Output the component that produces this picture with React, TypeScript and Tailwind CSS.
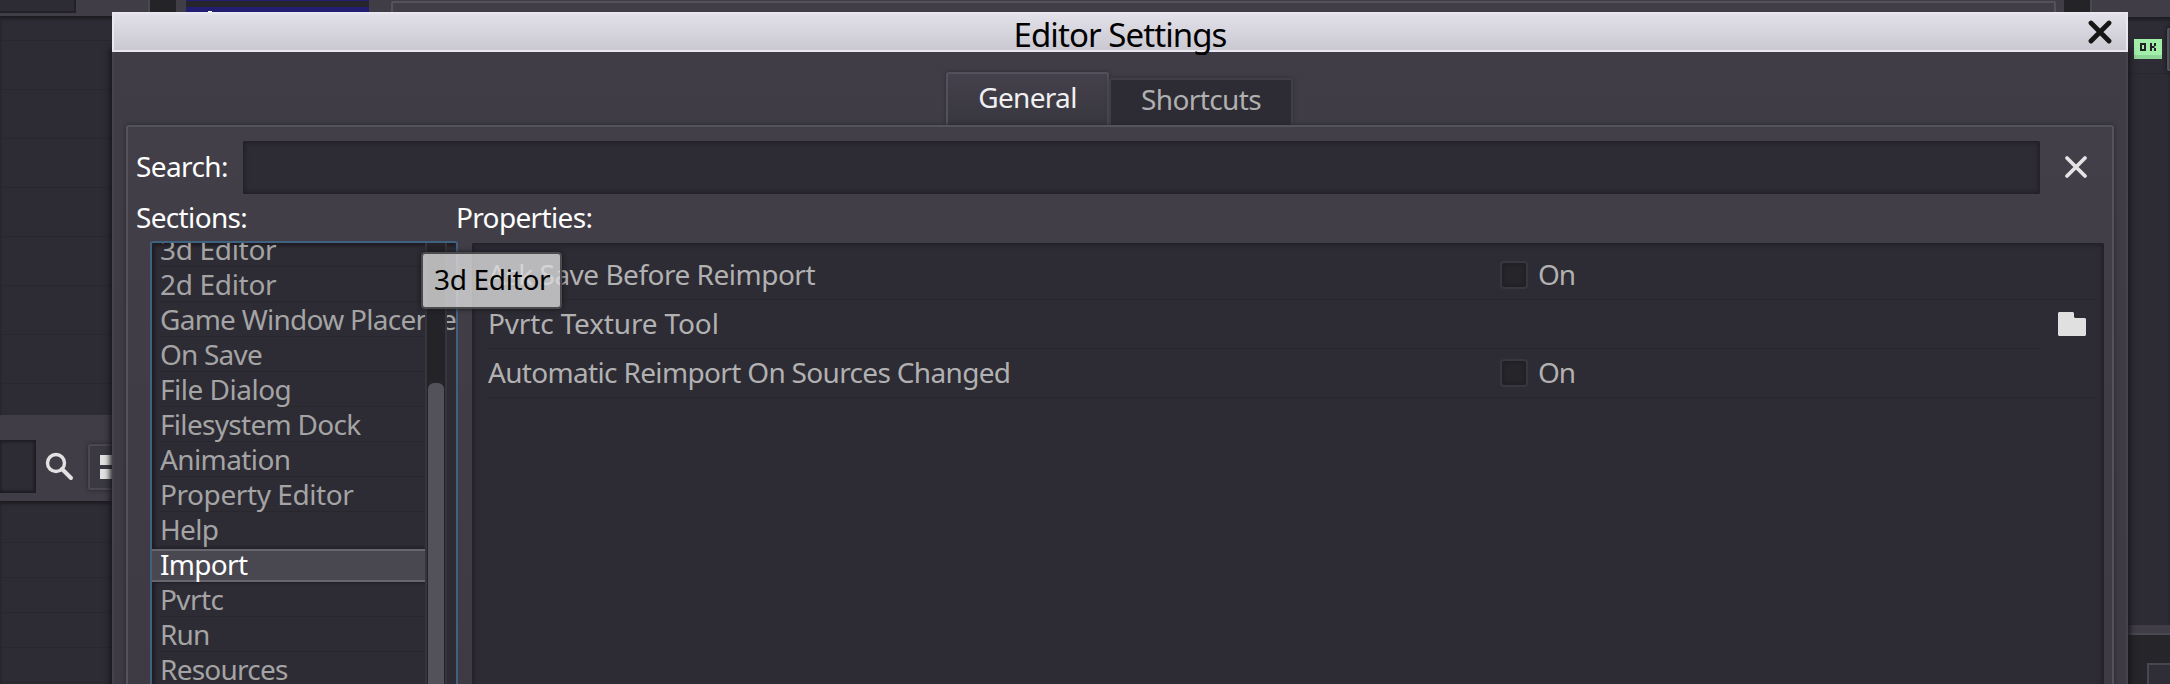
import type { ReactNode } from "react";

const sections = [
  { name: "3d Editor", tracking: "tracking-[-0.32px]" },
  { name: "2d Editor", tracking: "tracking-[-0.32px]" },
  { name: "Game Window Placement", tracking: "tracking-[-0.73px]" },
  { name: "On Save", tracking: "tracking-[-0.8px]" },
  { name: "File Dialog", tracking: "tracking-[-0.5px]" },
  { name: "Filesystem Dock", tracking: "tracking-[-0.7px]" },
  { name: "Animation", tracking: "tracking-[-0.6px]" },
  { name: "Property Editor", tracking: "tracking-[-0.42px]" },
  { name: "Help", tracking: "tracking-[-0.7px]" },
  { name: "Import", tracking: "tracking-[-0.7px]" },
  { name: "Pvrtc", tracking: "tracking-[-0.6px]" },
  { name: "Run", tracking: "tracking-[-0.8px]" },
  { name: "Resources", tracking: "tracking-[-0.75px]" },
];

function Lines({ first, pitch, count }: { first: string; pitch: string; count: number }) {
  return (
    <div>
      <div className={`${first} border-b border-[#28272c]`} />
      {Array.from({ length: count }, (_, i) => (
        <div key={i} className={`${pitch} border-b border-[#28272c]`} />
      ))}
    </div>
  );
}

function Backdrop() {
  return (
    <div className="flex h-full w-full justify-between bg-[#242328]">
      <div className="flex w-[150px] flex-col border-r-2 border-[#494752] bg-[#403d47]">
        <div className="h-[13px] w-[76px] shrink-0 border-r-2 border-b-2 border-[#222127] bg-[#2d2b34]" />
        <div className="mt-[3px] h-[399px] w-full shrink-0 overflow-hidden bg-[#2d2b34] shadow-[inset_0_3px_3px_#1e1d22]">
          <Lines first="h-[25px]" pitch="h-[49px]" count={7} />
        </div>
        <div className="flex h-[86px] w-full shrink-0 items-center overflow-hidden">
          <div className="mt-[25px] h-[53px] w-[36px] shrink-0 self-start bg-[#2d2b34] shadow-[inset_-2px_0_3px_#1e1d22,inset_0_2px_3px_#1e1d22,inset_0_-2px_3px_#1e1d22]" />
          <svg className="mt-[17px] ml-[9px] shrink-0" width="30" height="30" viewBox="0 0 30 30" fill="none" stroke="#e2e2e2">
            <circle cx="11" cy="11" r="8.5" strokeWidth="3.4" />
            <path d="M17 17 L26 26" strokeWidth="4" strokeLinecap="round" />
          </svg>
          <div className="mt-[17px] ml-[13px] flex h-[46px] w-[50px] shrink-0 flex-col justify-center gap-[4px] rounded-[2px] border-2 border-[#4a4853] bg-[#3a3841] pl-[10px] shadow-[0_0_4px_#25242a]">
            <div className="h-[10px] w-[12px] bg-[#e2e2e2]" />
            <div className="h-[10px] w-[12px] bg-[#e2e2e2]" />
          </div>
        </div>
        <div className="w-full flex-1 overflow-hidden bg-[#2d2b34] shadow-[inset_0_3px_3px_#1e1d22]">
          <Lines first="h-[42px]" pitch="h-[35px]" count={4} />
        </div>
      </div>
      <div className="ml-[26px] flex flex-1 bg-[#403d47]">
        <div className="ml-[10px] h-[40px] w-[183px] bg-[#211d70] pt-px">
          <div className="h-[6px] bg-[#26252b]" />
          <div className="mt-[4px] ml-[22px] h-px w-[4px] bg-white" />
        </div>
        <div className="mt-px mr-[8px] ml-[22px] h-[40px] flex-1 rounded-[2px] border-2 border-[#54525e] bg-[#403d47]" />
      </div>
      <div className="ml-[26px] flex w-[80px] flex-col border-l-2 border-[#4a4852] bg-[#403d47]">
        <div className="mt-[17px] h-[608px] bg-[#2d2b34] shadow-[inset_0_3px_3px_#1e1d22]">
          <div className="flex h-[57px] items-start border-b border-[#28272c] pt-[22px] pl-[42px]">
            <div className="flex h-[20px] w-[28px] shrink-0 border-b-4 border-[#90d598] bg-[#a2efaa] pt-[4px] pl-[6px]">
              <svg width="18" height="8" viewBox="0 0 18 8" fill="none" stroke="#222127" strokeWidth="2">
                <path d="M1 1 H5 V7 H1 Z" />
                <path d="M11 0 V8 M15 0 V3 M15 5 V8" />
                <path d="M12 4 H14.5" />
              </svg>
            </div>
            <div className="-mt-[11px] ml-[5px] h-[43px] w-[20px] shrink-0 rounded-l-[2px] border-2 border-[#55535e] bg-[#403d47] shadow-[0_0_4px_#111]" />
          </div>
        </div>
        <div className="h-[10px] border-b-2 border-[#4a4852]" />
        <div className="flex-1 bg-[#26252a] pt-[28px] pl-[55px]">
          <div className="h-full border-t-2 border-l-2 border-[#484650] bg-[#2f2d36]" />
        </div>
      </div>
    </div>
  );
}

function Cross({ color, width, size }: { color: string; width: number; size: number }) {
  return (
    <svg width={size} height={size} viewBox="0 0 24 24" className="shrink-0" fill="none" stroke={color} strokeWidth={width}>
      <path d="M3 3 L21 21 M21 3 L3 21" strokeLinecap="round" />
    </svg>
  );
}

function PropertyRow({ label, tracking, children, short }: { label: string; tracking: string; children: ReactNode; short?: boolean }) {
  return (
    <div className="relative flex h-[49px] items-center pb-[2px]">
      <span className={`w-[1014px] shrink-0 text-[#b1b1b1] ${tracking}`}>{label}</span>
      {children}
      <div className={short ? "absolute bottom-0 left-0 h-px w-[1552px] bg-[#28272c]" : "absolute bottom-0 left-0 h-px w-[1608px] bg-[#28272c]"} />
    </div>
  );
}

function OnCheck() {
  return (
    <div className="flex items-center">
      <div className="-ml-[2px] size-[28px] rounded-[4px] border-2 border-[#38363f] bg-[#26252a] shadow-[inset_0_0_4px_#1c1b20]" />
      <span className="ml-[10px] tracking-[-1px] text-[#b1b1b1]">On</span>
    </div>
  );
}

export default function App() {
  return (
    <div className="relative h-[684px] w-[2170px] overflow-hidden font-['Noto_Sans',sans-serif] text-[28px] leading-[35px] whitespace-nowrap">
      <Backdrop />
      <div className="absolute top-[12px] left-[112px] flex h-[690px] w-[2016px] flex-col bg-[#403d47] shadow-[0_38px_6px_2px_#161519]">
        <header className="relative flex h-[40px] shrink-0 items-center justify-center border-2 border-[#e9e7f0] bg-linear-to-b from-[#e2e0e9] to-[#cac8d1]">
          <h1 className="mt-[5px] text-[33px] leading-[40px] tracking-[-0.93px] text-black">Editor Settings</h1>
          <div className="absolute top-[6px] right-[14px]"><Cross color="#161616" width={4.8} size={24} /></div>
        </header>
        <div className="flex flex-1 flex-col border-x-2 border-t-0 border-[#45434d] bg-linear-to-b from-[#403d47] to-[#3d3a44] px-[12px]">
          <nav className="flex h-[73px] shrink-0 items-end pl-[820px]">
            <div className="flex h-[53px] w-[163px] justify-center rounded-t-[3px] border-2 border-b-0 border-[#53515d] bg-linear-to-b from-[#44414c] to-[#38363f] pt-[6px] tracking-[-0.7px] text-[#f0f0f0] shadow-[0_0_4px_#2c2a31]">General</div>
            <div className="flex h-[47px] w-[184px] justify-center rounded-t-[3px] border-2 border-b-0 border-[#403e48] bg-[#2d2b33] pt-[2px] tracking-[-0.6px] text-[#b0b0b0] shadow-[0_0_4px_#302e36]">Shortcuts</div>
          </nav>
          <main className="flex flex-1 flex-col rounded-t-[3px] border-2 border-b-0 border-[#54525d] bg-linear-to-b from-[#423f49] to-[#3d3a44] shadow-[0_0_5px_#27262c]">
            <div className="mt-[14px] flex h-[53px] items-center pl-[8px] text-white">
              <span className="-mt-[2px] w-[107px] tracking-[-0.6px]">Search:</span>
              <div className="h-[53px] w-[1797px] rounded-[2px] bg-[#2d2b34] shadow-[inset_0_0_5px_1px_#1e1d22]" />
              <div className="-mt-px ml-[24px]"><Cross color="#e4e4e4" width={3.8} size={24} /></div>
            </div>
            <div className="mt-[6px] flex h-[41px] pl-[8px] text-white">
              <span className="w-[320px] tracking-[-0.66px]">Sections:</span>
              <span className="tracking-[-0.66px]">Properties:</span>
            </div>
            <div className="flex flex-1">
              <div className="relative ml-[22px] h-[460px] w-[308px] overflow-hidden rounded-t-[3px] border-2 border-[#40617f] bg-[#2d2b34] shadow-[inset_3px_3px_3px_#1f1e23]">
                <div className="-mt-[11px]">
                  {sections.map(({ name, tracking }) =>
                    name === "Import" ? (
                      <div key={name} className={`relative h-[35px] pl-[8px] text-white ${tracking}`}>
                        <div className="absolute top-[2px] left-0 h-[33px] w-[274px] border-y-2 border-[#67656d] bg-[#49474f] shadow-[0_0_3px_#16151a]" />
                        <span className="relative">{name}</span>
                      </div>
                    ) : (
                      <div key={name} className={`relative h-[35px] pl-[8px] text-[#a4a4a4] ${tracking}`}>
                        <div className="absolute bottom-0 left-[8px] h-px w-[264px] bg-[#28272c]" />
                        <span className="relative">{name}</span>
                      </div>
                    ),
                  )}
                </div>
                <div className="absolute top-0 left-[273px] h-full w-[22px] border-x-2 border-[#36343d] bg-[#242328] px-px pt-[140px]">
                  <div className="h-full w-[16px] rounded-t-[6px] bg-[#53515a]" />
                </div>
              </div>
              <div className="mt-[2px] ml-[14px] w-[1632px] rounded-t-[2px] bg-[#2d2b34] pt-[8px] pl-[16px] shadow-[inset_0_0_5px_1px_#1e1d22]">
                <PropertyRow label="Ask Save Before Reimport" tracking="tracking-[-0.5px]"><OnCheck /></PropertyRow>
                <PropertyRow label="Pvrtc Texture Tool" tracking="tracking-[-0.15px]" short>
                  <svg className="ml-[556px]" width="28" height="24" viewBox="0 0 28 24">
                    <path fill="#e0e0e0" d="M1 0 H15 L16 1 V5 L17 6 H27 L28 7 V23 L27 24 H1 L0 23 V1 Z" />
                  </svg>
                </PropertyRow>
                <PropertyRow label="Automatic Reimport On Sources Changed" tracking="tracking-[-0.67px]"><OnCheck /></PropertyRow>
              </div>
            </div>
          </main>
        </div>
      </div>
      <div className="absolute top-[252px] left-[421px] h-[57px] w-[141px] rounded-[4px] border-2 border-[#4b4a4d] bg-[#dcdcdc]/80 pt-[8px] pl-[11px] tracking-[-0.32px] text-black shadow-[0_0_5px_#151419]">
        3d Editor
      </div>
    </div>
  );
}
